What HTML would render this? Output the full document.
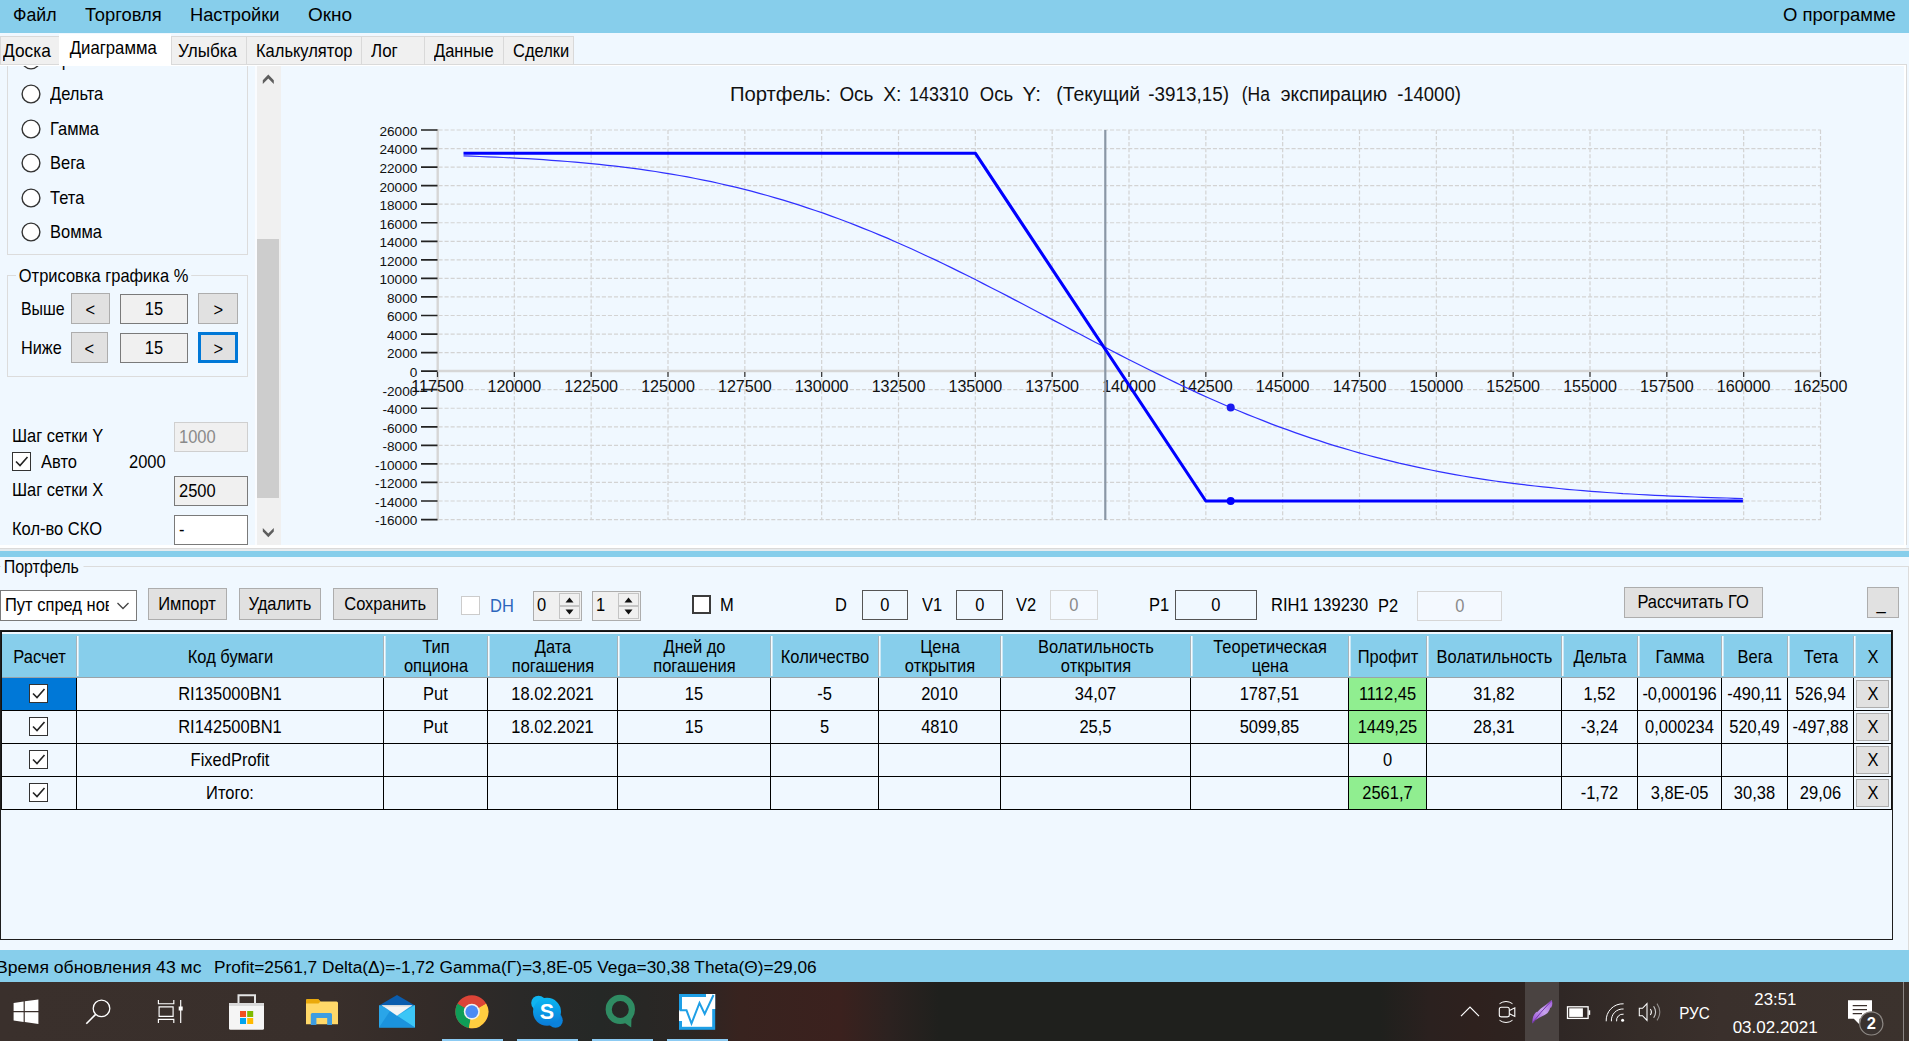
<!DOCTYPE html><html lang="ru"><head><meta charset="utf-8"><title>Option chart</title><style>
*{box-sizing:border-box;margin:0;padding:0}
html,body{width:1909px;height:1041px;overflow:hidden;background:#F0F8FF;font-family:"Liberation Sans",sans-serif;color:#000}
.a{position:absolute}
.t{position:absolute;white-space:pre;font-size:17.8px;line-height:20px;height:20px;transform:scaleX(.927);transform-origin:0 50%}
.s{display:inline-block;transform:scaleX(.927);transform-origin:50% 50%}
.sl{display:inline-block;transform:scaleX(.927);transform-origin:0 50%}
.c{text-align:center}
.r{text-align:right}
.menu{left:0;top:0;width:1909px;height:33px;background:#87CEEB}
.menu .t{font-size:18px;top:4px;line-height:22px;height:22px;transform:none}
.tab{position:absolute;top:36px;height:28px;background:#F0F0F0;border:1px solid #D9D9D9;border-bottom:none;font-size:17.8px;line-height:28px;white-space:pre}
.tab.sel{top:34px;height:32px;background:#fff;border:none;line-height:28px;z-index:2}
.gb{position:absolute;border:1px solid #DCDCDC}
.radio{position:absolute;width:19px;height:19px;border:1.5px solid #333;border-radius:50%;background:#fff}
.btn{position:absolute;background:#E1E1E1;border:1px solid #ADADAD;font-size:17.8px;text-align:center;white-space:pre}
.inp{position:absolute;background:#fff;border:1px solid #7A7A7A;font-size:17.8px;white-space:pre}
.chk{position:absolute;width:19px;height:19px;border:1px solid #333;background:#fff}
.hd{position:absolute;font-size:17.8px;line-height:19px;text-align:center;white-space:pre;transform:scaleX(.927)}
.cell{position:absolute;font-size:17.8px;line-height:20px;height:20px;text-align:center;white-space:pre;transform:scaleX(.927)}
</style></head><body>
<div class="a menu">
<div class="t" style="left:12.5px;transform:scaleX(0.983)">Файл</div>
<div class="t" style="left:84.8px;transform:scaleX(1.02)">Торговля</div>
<div class="t" style="left:189.6px;transform:scaleX(1.014)">Настройки</div>
<div class="t" style="left:307.8px;transform:scaleX(1.055)">Окно</div>
<div class="t" style="left:1783px;transform:scaleX(1.025)">О программе</div>
</div>
<div class="a" style="left:0;top:33px;width:1909px;height:33px;background:#F0F8FF"></div>
<div class="tab" style="left:0px;width:60px;padding-left:2px"><span class="sl" style="transform:scaleX(0.973)">Доска</span></div>
<div class="tab sel c" style="left:59px;width:112px;padding-right:3px"><span class="s" style="transform:scaleX(0.941)">Диаграмма</span></div>
<div class="tab" style="left:171px;width:76px;padding-left:6px"><span class="sl" style="transform:scaleX(0.959)">Улыбка</span></div>
<div class="tab" style="left:246px;width:116px;padding-left:9px"><span class="sl" style="transform:scaleX(0.927)">Калькулятор</span></div>
<div class="tab" style="left:361px;width:64px;padding-left:9px"><span class="sl" style="transform:scaleX(0.955)">Лог</span></div>
<div class="tab" style="left:424px;width:80px;padding-left:9px"><span class="sl" style="transform:scaleX(0.927)">Данные</span></div>
<div class="tab" style="left:503px;width:71px;padding-left:9px"><span class="sl" style="transform:scaleX(0.927)">Сделки</span></div>
<div class="a" style="left:0;top:64px;width:1909px;height:1px;background:#DADADA"></div>
<div class="a" style="left:0;top:65px;width:1909px;height:1px;background:#fff"></div>
<div class="a" style="left:0;top:66px;width:257px;height:479px;overflow:hidden"><div class="a" style="left:0;top:1px">
<div class="gb" style="left:7px;top:-60px;width:241px;height:248px"></div>
<svg class="a" style="left:20px;top:-18.5px" width="22" height="22"><circle cx="11" cy="11" r="8.9" fill="#fff" stroke="#333" stroke-width="1.4"/></svg>
<div class="t" style="left:50px;top:-17px">Прибыль</div>
<svg class="a" style="left:20px;top:16.0px" width="22" height="22"><circle cx="11" cy="11" r="8.9" fill="#fff" stroke="#333" stroke-width="1.4"/></svg>
<div class="t" style="left:50px;top:17.0px">Дельта</div>
<svg class="a" style="left:20px;top:50.5px" width="22" height="22"><circle cx="11" cy="11" r="8.9" fill="#fff" stroke="#333" stroke-width="1.4"/></svg>
<div class="t" style="left:50px;top:51.5px">Гамма</div>
<svg class="a" style="left:20px;top:85.0px" width="22" height="22"><circle cx="11" cy="11" r="8.9" fill="#fff" stroke="#333" stroke-width="1.4"/></svg>
<div class="t" style="left:50px;top:86.0px">Вега</div>
<svg class="a" style="left:20px;top:119.5px" width="22" height="22"><circle cx="11" cy="11" r="8.9" fill="#fff" stroke="#333" stroke-width="1.4"/></svg>
<div class="t" style="left:50px;top:120.5px">Тета</div>
<svg class="a" style="left:20px;top:154.0px" width="22" height="22"><circle cx="11" cy="11" r="8.9" fill="#fff" stroke="#333" stroke-width="1.4"/></svg>
<div class="t" style="left:50px;top:155.0px">Вомма</div>
<div class="gb" style="left:7px;top:208px;width:241px;height:102px"></div>
<div class="t" style="left:16px;top:199px;background:#F0F8FF;padding:0 3px">Отрисовка графика %</div>
<div class="t" style="left:21px;top:232px;transform:scaleX(0.895)">Выше</div>
<div class="btn" style="left:71px;top:226px;width:39px;height:31px;line-height:33px"><span class="s">&lt;</span></div>
<div class="inp c" style="left:120px;top:227px;width:68px;height:30px;line-height:28px;background:#F0F0F0"><span class="s">15</span></div>
<div class="btn" style="left:198px;top:226px;width:40px;height:31px;line-height:33px"><span class="s">&gt;</span></div>
<div class="t" style="left:21px;top:271px;transform:scaleX(0.915)">Ниже</div>
<div class="btn" style="left:71px;top:265px;width:37px;height:31px;line-height:33px"><span class="s">&lt;</span></div>
<div class="inp c" style="left:120px;top:266px;width:68px;height:30px;line-height:28px;background:#F0F0F0"><span class="s">15</span></div>
<div class="btn" style="left:198px;top:265px;width:40px;height:31px;line-height:29px;border:3px solid #0078D7"><span class="s">&gt;</span></div>
<div class="t" style="left:12px;top:359px">Шаг сетки Y</div>
<div class="inp" style="left:174px;top:355px;width:74px;height:30px;line-height:28px;background:#F0F0F0;border-color:#CFCFCF;color:#8A8A8A;padding-left:4px"><span class="sl">1000</span></div>
<div class="chk" style="left:12px;top:385px"><svg width="17" height="17" viewBox="0 0 17 17" style="display:block"><path d="M3 8.5 L7 12.5 L14.5 4" fill="none" stroke="#222" stroke-width="1.6"/></svg></div>
<div class="t" style="left:41px;top:385px">Авто</div>
<div class="t" style="left:129px;top:385px">2000</div>
<div class="t" style="left:12px;top:413px">Шаг сетки X</div>
<div class="inp" style="left:174px;top:409px;width:74px;height:30px;line-height:28px;background:#F0F0F0;padding-left:4px"><span class="sl">2500</span></div>
<div class="t" style="left:12px;top:452px">Кол-во СКО</div>
<div class="inp" style="left:174px;top:448px;width:74px;height:30px;line-height:28px;padding-left:4px"><span class="sl">-</span></div>
</div></div>
<div class="a" style="left:255px;top:66px;width:2px;height:479px;background:#FAFCFF"></div><div class="a" style="left:257px;top:66px;width:24px;height:479px;background:#F0F0F0"></div>
<div class="a" style="left:257px;top:239px;width:22px;height:259px;background:#CDCDCD"></div>
<svg class="a" style="left:0;top:0" width="300" height="560"><path d="M262.8 80.3 L268.3 74.6 L273.8 80.3 V84 L268.3 78.5 L262.8 84Z M262.8 527.9 L268.3 533.5 L273.8 527.9 V531.6 L268.3 537.3 L262.8 531.6Z" fill="#5E5E5E"/></svg>
<div class="a" style="left:1904px;top:65px;width:2px;height:483px;background:#fff"></div>
<div class="a" style="left:1906px;top:64px;width:1px;height:485px;background:#DADADA"></div><div class="a" style="left:1907px;top:64px;width:2px;height:2px;background:#F0F8FF"></div>
<svg class="a" style="left:0;top:0" width="1909" height="560" viewBox="0 0 1909 560" font-family="Liberation Sans, sans-serif">
<path d="M438.5 130.00H1821 M438.5 148.55H1821 M438.5 167.10H1821 M438.5 185.65H1821 M438.5 204.20H1821 M438.5 222.75H1821 M438.5 241.30H1821 M438.5 259.85H1821 M438.5 278.40H1821 M438.5 296.95H1821 M438.5 315.50H1821 M438.5 334.05H1821 M438.5 352.60H1821 M438.5 371.15H1821 M438.5 389.70H1821 M438.5 408.25H1821 M438.5 426.80H1821 M438.5 445.35H1821 M438.5 463.90H1821 M438.5 482.45H1821 M438.5 501.00H1821 M438.5 519.55H1821 M514.33 130V520 M591.17 130V520 M668.00 130V520 M744.83 130V520 M821.67 130V520 M898.50 130V520 M975.33 130V520 M1052.17 130V520 M1129.00 130V520 M1205.83 130V520 M1282.67 130V520 M1359.50 130V520 M1436.33 130V520 M1513.17 130V520 M1590.00 130V520 M1666.83 130V520 M1743.67 130V520 M1820.50 130V520" stroke="#D3D3D3" stroke-width="1.2" stroke-dasharray="4.1 1.95" fill="none"/>
<path d="M437.7 129V520.5" stroke="#D6D6D6" stroke-width="2.4"/>
<path d="M437 371H1821" stroke="#D6D6D6" stroke-width="2.4"/>
<text x="417.3" y="135.8" font-size="13.6" text-anchor="end" fill="#111">26000</text>
<text x="417.3" y="154.4" font-size="13.6" text-anchor="end" fill="#111">24000</text>
<text x="417.3" y="172.9" font-size="13.6" text-anchor="end" fill="#111">22000</text>
<text x="417.3" y="191.5" font-size="13.6" text-anchor="end" fill="#111">20000</text>
<text x="417.3" y="210.0" font-size="13.6" text-anchor="end" fill="#111">18000</text>
<text x="417.3" y="228.6" font-size="13.6" text-anchor="end" fill="#111">16000</text>
<text x="417.3" y="247.1" font-size="13.6" text-anchor="end" fill="#111">14000</text>
<text x="417.3" y="265.7" font-size="13.6" text-anchor="end" fill="#111">12000</text>
<text x="417.3" y="284.2" font-size="13.6" text-anchor="end" fill="#111">10000</text>
<text x="417.3" y="302.8" font-size="13.6" text-anchor="end" fill="#111">8000</text>
<text x="417.3" y="321.3" font-size="13.6" text-anchor="end" fill="#111">6000</text>
<text x="417.3" y="339.9" font-size="13.6" text-anchor="end" fill="#111">4000</text>
<text x="417.3" y="358.4" font-size="13.6" text-anchor="end" fill="#111">2000</text>
<text x="417.3" y="376.9" font-size="13.6" text-anchor="end" fill="#111">0</text>
<text x="417.3" y="395.5" font-size="13.6" text-anchor="end" fill="#111">-2000</text>
<text x="417.3" y="414.1" font-size="13.6" text-anchor="end" fill="#111">-4000</text>
<text x="417.3" y="432.6" font-size="13.6" text-anchor="end" fill="#111">-6000</text>
<text x="417.3" y="451.2" font-size="13.6" text-anchor="end" fill="#111">-8000</text>
<text x="417.3" y="469.7" font-size="13.6" text-anchor="end" fill="#111">-10000</text>
<text x="417.3" y="488.2" font-size="13.6" text-anchor="end" fill="#111">-12000</text>
<text x="417.3" y="506.8" font-size="13.6" text-anchor="end" fill="#111">-14000</text>
<text x="417.3" y="525.3" font-size="13.6" text-anchor="end" fill="#111">-16000</text>
<path d="M421 130.00H437.5 M421 148.55H437.5 M421 167.10H437.5 M421 185.65H437.5 M421 204.20H437.5 M421 222.75H437.5 M421 241.30H437.5 M421 259.85H437.5 M421 278.40H437.5 M421 296.95H437.5 M421 315.50H437.5 M421 334.05H437.5 M421 352.60H437.5 M421 371.15H437.5 M421 389.70H437.5 M421 408.25H437.5 M421 426.80H437.5 M421 445.35H437.5 M421 463.90H437.5 M421 482.45H437.5 M421 501.00H437.5 M421 519.55H437.5" stroke="#222" stroke-width="1.7" fill="none"/>
<text x="437.5" y="392.2" font-size="16.1" text-anchor="middle" fill="#111">117500</text>
<text x="514.3" y="392.2" font-size="16.1" text-anchor="middle" fill="#111">120000</text>
<text x="591.2" y="392.2" font-size="16.1" text-anchor="middle" fill="#111">122500</text>
<text x="668.0" y="392.2" font-size="16.1" text-anchor="middle" fill="#111">125000</text>
<text x="744.8" y="392.2" font-size="16.1" text-anchor="middle" fill="#111">127500</text>
<text x="821.7" y="392.2" font-size="16.1" text-anchor="middle" fill="#111">130000</text>
<text x="898.5" y="392.2" font-size="16.1" text-anchor="middle" fill="#111">132500</text>
<text x="975.3" y="392.2" font-size="16.1" text-anchor="middle" fill="#111">135000</text>
<text x="1052.2" y="392.2" font-size="16.1" text-anchor="middle" fill="#111">137500</text>
<text x="1129.0" y="392.2" font-size="16.1" text-anchor="middle" fill="#111">140000</text>
<text x="1205.8" y="392.2" font-size="16.1" text-anchor="middle" fill="#111">142500</text>
<text x="1282.7" y="392.2" font-size="16.1" text-anchor="middle" fill="#111">145000</text>
<text x="1359.5" y="392.2" font-size="16.1" text-anchor="middle" fill="#111">147500</text>
<text x="1436.3" y="392.2" font-size="16.1" text-anchor="middle" fill="#111">150000</text>
<text x="1513.2" y="392.2" font-size="16.1" text-anchor="middle" fill="#111">152500</text>
<text x="1590.0" y="392.2" font-size="16.1" text-anchor="middle" fill="#111">155000</text>
<text x="1666.8" y="392.2" font-size="16.1" text-anchor="middle" fill="#111">157500</text>
<text x="1743.7" y="392.2" font-size="16.1" text-anchor="middle" fill="#111">160000</text>
<text x="1820.5" y="392.2" font-size="16.1" text-anchor="middle" fill="#111">162500</text>
<path d="M437.50 372V377 M514.33 372V377 M591.17 372V377 M668.00 372V377 M744.83 372V377 M821.67 372V377 M898.50 372V377 M975.33 372V377 M1052.17 372V377 M1129.00 372V377 M1205.83 372V377 M1282.67 372V377 M1359.50 372V377 M1436.33 372V377 M1513.17 372V377 M1590.00 372V377 M1666.83 372V377 M1743.67 372V377 M1820.50 372V377" stroke="#333" stroke-width="1.2" fill="none"/>
<path d="M1105.3 130V520" stroke="#8A97A6" stroke-width="2.2"/>
<polyline points="463.5,155.9 471.5,156.2 479.5,156.5 487.5,156.8 495.5,157.1 503.5,157.5 511.5,157.9 519.5,158.3 527.5,158.7 535.5,159.2 543.4,159.7 551.4,160.3 559.4,160.9 567.4,161.5 575.4,162.1 583.4,162.9 591.4,163.6 599.4,164.4 607.4,165.3 615.4,166.2 623.4,167.1 631.4,168.1 639.4,169.2 647.4,170.3 655.4,171.5 663.4,172.8 671.4,174.1 679.4,175.5 687.4,176.9 695.4,178.5 703.4,180.1 711.4,181.7 719.4,183.5 727.4,185.3 735.4,187.2 743.4,189.1 751.4,191.2 759.3,193.3 767.3,195.5 775.3,197.8 783.3,200.2 791.3,202.6 799.3,205.2 807.3,207.8 815.3,210.5 823.3,213.2 831.3,216.1 839.3,219.0 847.3,222.0 855.3,225.1 863.3,228.3 871.3,231.5 879.3,234.9 887.3,238.2 895.3,241.7 903.3,245.2 911.3,248.8 919.3,252.5 927.3,256.2 935.3,259.9 943.3,263.8 951.3,267.6 959.3,271.6 967.3,275.5 975.3,279.5 983.2,283.6 991.2,287.7 999.2,291.8 1007.2,295.9 1015.2,300.1 1023.2,304.3 1031.2,308.5 1039.2,312.7 1047.2,316.9 1055.2,321.1 1063.2,325.3 1071.2,329.6 1079.2,333.8 1087.2,338.0 1095.2,342.2 1103.2,346.3 1111.2,350.5 1119.2,354.6 1127.2,358.7 1135.2,362.7 1143.2,366.7 1151.2,370.7 1159.2,374.6 1167.2,378.5 1175.2,382.4 1183.2,386.2 1191.2,389.9 1199.1,393.6 1207.1,397.2 1215.1,400.7 1223.1,404.2 1231.1,407.7 1239.1,411.0 1247.1,414.3 1255.1,417.5 1263.1,420.7 1271.1,423.8 1279.1,426.8 1287.1,429.7 1295.1,432.6 1303.1,435.4 1311.1,438.1 1319.1,440.7 1327.1,443.3 1335.1,445.8 1343.1,448.2 1351.1,450.5 1359.1,452.8 1367.1,455.0 1375.1,457.1 1383.1,459.2 1391.1,461.1 1399.1,463.1 1407.1,464.9 1415.0,466.7 1423.0,468.4 1431.0,470.0 1439.0,471.6 1447.0,473.1 1455.0,474.6 1463.0,476.0 1471.0,477.3 1479.0,478.6 1487.0,479.8 1495.0,481.0 1503.0,482.1 1511.0,483.1 1519.0,484.1 1527.0,485.1 1535.0,486.0 1543.0,486.9 1551.0,487.7 1559.0,488.5 1567.0,489.3 1575.0,490.0 1583.0,490.7 1591.0,491.3 1599.0,491.9 1607.0,492.5 1615.0,493.0 1623.0,493.6 1630.9,494.0 1638.9,494.5 1646.9,494.9 1654.9,495.3 1662.9,495.7 1670.9,496.1 1678.9,496.4 1686.9,496.7 1694.9,497.0 1702.9,497.3 1710.9,497.6 1718.9,497.8 1726.9,498.0 1734.9,498.3 1742.9,498.5" fill="none" stroke="#3030FF" stroke-width="1.25"/>
<polyline points="463.5,153.2 975.3,153.2 1205.8,501.0 1742.9,501.0" fill="none" stroke="#0000FF" stroke-width="3.1" stroke-linejoin="round"/>
<circle cx="1230.7" cy="407.5" r="4" fill="#1A1AF0"/>
<circle cx="1230.7" cy="501.0" r="4" fill="#0000FF"/>
<text x="729.9" y="100.5" font-size="19.5" fill="#111" textLength="101.1" lengthAdjust="spacingAndGlyphs">Портфель:</text>
<text x="839.4" y="100.5" font-size="19.5" fill="#111" textLength="34.0" lengthAdjust="spacingAndGlyphs">Ось</text>
<text x="883.2" y="100.5" font-size="19.5" fill="#111" textLength="18.3" lengthAdjust="spacingAndGlyphs">X:</text>
<text x="909.1" y="100.5" font-size="19.5" fill="#111" textLength="59.7" lengthAdjust="spacingAndGlyphs">143310</text>
<text x="979.8" y="100.5" font-size="19.5" fill="#111" textLength="33.3" lengthAdjust="spacingAndGlyphs">Ось</text>
<text x="1022.5" y="100.5" font-size="19.5" fill="#111" textLength="18.4" lengthAdjust="spacingAndGlyphs">Y:</text>
<text x="1056.3" y="100.5" font-size="19.5" fill="#111" textLength="83.8" lengthAdjust="spacingAndGlyphs">(Текущий</text>
<text x="1148.3" y="100.5" font-size="19.5" fill="#111" textLength="80.7" lengthAdjust="spacingAndGlyphs">-3913,15)</text>
<text x="1241.8" y="100.5" font-size="19.5" fill="#111" textLength="28.1" lengthAdjust="spacingAndGlyphs">(На</text>
<text x="1280.8" y="100.5" font-size="19.5" fill="#111" textLength="106.4" lengthAdjust="spacingAndGlyphs">экспирацию</text>
<text x="1397.2" y="100.5" font-size="19.5" fill="#111" textLength="63.6" lengthAdjust="spacingAndGlyphs">-14000)</text>
</svg>
<div class="a" style="left:0;top:545px;width:1909px;height:3px;background:#fff"></div>
<div class="a" style="left:0;top:548px;width:1909px;height:1px;background:#DADADA"></div>
<div class="a" style="left:0;top:549px;width:1909px;height:2px;background:#E6EBEE"></div>
<div class="a" style="left:0;top:551px;width:1909px;height:6px;background:#87CEEB"></div>
<div class="a" style="left:1906px;top:545px;width:3px;height:3px;background:#F0F8FF"></div>
<div class="a" style="left:0;top:566px;width:1909px;height:1px;background:#DCDCDC"></div>
<div class="a" style="left:1908px;top:566px;width:1px;height:384px;background:#DCDCDC"></div>
<div class="t" style="left:1px;top:557px;background:#F0F8FF;padding:0 5px 0 3px;width:92px;transform:scaleX(.897)">Портфель</div>
<div class="inp" style="left:0px;top:590px;width:137px;height:31px;border-color:#7A7A7A;line-height:29px;padding-left:4px;overflow:hidden"><span class="sl" style="width:112px;overflow:hidden;vertical-align:top">Пут спред новый</span></div>
<svg class="a" style="left:114px;top:598px" width="18" height="16"><path d="M3.5 5 L9 10.5 L14.5 5" fill="none" stroke="#444" stroke-width="1.3"/></svg>
<div class="btn" style="left:148px;top:588px;width:79px;height:32px;line-height:30px"><span class="s">Импорт</span></div>
<div class="btn" style="left:239px;top:588px;width:82px;height:32px;line-height:30px"><span class="s">Удалить</span></div>
<div class="btn" style="left:333px;top:588px;width:105px;height:32px;line-height:30px"><span class="s">Сохранить</span></div>
<div class="chk" style="left:461px;top:596px;border-color:#CCCCCC"></div>
<div class="t" style="left:490px;top:596px;color:#2C66BC">DH</div>
<div class="inp" style="left:533px;top:591px;width:49px;height:30px;background:#F0F0F0;border-color:#ADADAD;line-height:26px;padding-left:3px"><span class="sl">0</span></div>
<div class="a" style="left:559px;top:593px;width:21px;height:13px;background:#F0F0F0;border:1px solid #C4C4C4"></div>
<div class="a" style="left:559px;top:606px;width:21px;height:13px;background:#F0F0F0;border:1px solid #C4C4C4"></div>
<svg class="a" style="left:559px;top:593px" width="21" height="26"><path d="M6.5 9.5 L10.5 4.5 L14.5 9.5Z M6.5 16.5 L10.5 21.5 L14.5 16.5Z" fill="#111"/></svg>
<div class="inp" style="left:592px;top:591px;width:49px;height:30px;background:#F0F0F0;border-color:#ADADAD;line-height:26px;padding-left:3px"><span class="sl">1</span></div>
<div class="a" style="left:618px;top:593px;width:21px;height:13px;background:#F0F0F0;border:1px solid #C4C4C4"></div>
<div class="a" style="left:618px;top:606px;width:21px;height:13px;background:#F0F0F0;border:1px solid #C4C4C4"></div>
<svg class="a" style="left:618px;top:593px" width="21" height="26"><path d="M6.5 9.5 L10.5 4.5 L14.5 9.5Z M6.5 16.5 L10.5 21.5 L14.5 16.5Z" fill="#111"/></svg>
<div class="chk" style="left:692px;top:595px;border:2px solid #3C3C3C"></div>
<div class="t" style="left:720px;top:595px">M</div>
<div class="t" style="left:835px;top:595px">D</div>
<div class="inp c" style="left:862px;top:590px;width:46px;height:30px;line-height:28px;background:#F0F8FF;border-color:#555"><span class="s">0</span></div>
<div class="t" style="left:922px;top:595px">V1</div>
<div class="inp c" style="left:956px;top:590px;width:47px;height:30px;line-height:28px;background:#F0F8FF;border-color:#555"><span class="s">0</span></div>
<div class="t" style="left:1016px;top:595px">V2</div>
<div class="inp c" style="left:1050px;top:590px;width:48px;height:30px;line-height:28px;background:#F4F9FF;border-color:#D6D6D6;color:#8A8A8A"><span class="s">0</span></div>
<div class="t" style="left:1149px;top:595px">P1</div>
<div class="inp c" style="left:1175px;top:590px;width:82px;height:30px;line-height:28px;background:#F0F8FF;border-color:#555"><span class="s">0</span></div>
<div class="t" style="left:1271px;top:595px">RIH1 139230</div>
<div class="t" style="left:1378px;top:596px">P2</div>
<div class="inp c" style="left:1417px;top:591px;width:85px;height:30px;line-height:28px;background:#F4F9FF;border-color:#D6D6D6;color:#8A8A8A"><span class="s">0</span></div>
<div class="btn" style="left:1624px;top:587px;width:139px;height:31px;line-height:29px"><span class="s">Рассчитать ГО</span></div>
<div class="btn" style="left:1867px;top:587px;width:32px;height:31px;line-height:31px;text-indent:-2px"><span class="s">_</span></div>
<div class="a" style="left:0;top:630px;width:1893px;height:310px;border:1px solid #1E1E1E;background:#F0F8FF"></div>
<div class="a" style="left:1px;top:631px;width:1891px;height:179px;border:1px solid #111;border-bottom:none"></div>
<div class="a" style="left:2px;top:634px;width:1889px;height:43px;background:#87CEEB"></div>
<div class="hd" style="left:2px;top:648px;width:75px">Расчет</div>
<div class="a" style="left:76px;top:636px;width:1px;height:40px;background:#A8B4BA"></div>
<div class="a" style="left:77px;top:636px;width:2px;height:40px;background:linear-gradient(90deg,#F6FBFE 0 1px,#C9E8F6 1px 2px)"></div>
<div class="hd" style="left:77px;top:648px;width:307px">Код бумаги</div>
<div class="a" style="left:383px;top:636px;width:1px;height:40px;background:#A8B4BA"></div>
<div class="a" style="left:384px;top:636px;width:2px;height:40px;background:linear-gradient(90deg,#F6FBFE 0 1px,#C9E8F6 1px 2px)"></div>
<div class="hd" style="left:384px;top:637.5px;width:104px">Тип<br>опциона</div>
<div class="a" style="left:487px;top:636px;width:1px;height:40px;background:#A8B4BA"></div>
<div class="a" style="left:488px;top:636px;width:2px;height:40px;background:linear-gradient(90deg,#F6FBFE 0 1px,#C9E8F6 1px 2px)"></div>
<div class="hd" style="left:488px;top:637.5px;width:130px">Дата<br>погашения</div>
<div class="a" style="left:617px;top:636px;width:1px;height:40px;background:#A8B4BA"></div>
<div class="a" style="left:618px;top:636px;width:2px;height:40px;background:linear-gradient(90deg,#F6FBFE 0 1px,#C9E8F6 1px 2px)"></div>
<div class="hd" style="left:618px;top:637.5px;width:153px">Дней до<br>погашения</div>
<div class="a" style="left:770px;top:636px;width:1px;height:40px;background:#A8B4BA"></div>
<div class="a" style="left:771px;top:636px;width:2px;height:40px;background:linear-gradient(90deg,#F6FBFE 0 1px,#C9E8F6 1px 2px)"></div>
<div class="hd" style="left:771px;top:648px;width:108px">Количество</div>
<div class="a" style="left:878px;top:636px;width:1px;height:40px;background:#A8B4BA"></div>
<div class="a" style="left:879px;top:636px;width:2px;height:40px;background:linear-gradient(90deg,#F6FBFE 0 1px,#C9E8F6 1px 2px)"></div>
<div class="hd" style="left:879px;top:637.5px;width:122px">Цена<br>открытия</div>
<div class="a" style="left:1000px;top:636px;width:1px;height:40px;background:#A8B4BA"></div>
<div class="a" style="left:1001px;top:636px;width:2px;height:40px;background:linear-gradient(90deg,#F6FBFE 0 1px,#C9E8F6 1px 2px)"></div>
<div class="hd" style="left:1001px;top:637.5px;width:190px">Волатильность<br>открытия</div>
<div class="a" style="left:1190px;top:636px;width:1px;height:40px;background:#A8B4BA"></div>
<div class="a" style="left:1191px;top:636px;width:2px;height:40px;background:linear-gradient(90deg,#F6FBFE 0 1px,#C9E8F6 1px 2px)"></div>
<div class="hd" style="left:1191px;top:637.5px;width:158px">Теоретическая<br>цена</div>
<div class="a" style="left:1348px;top:636px;width:1px;height:40px;background:#A8B4BA"></div>
<div class="a" style="left:1349px;top:636px;width:2px;height:40px;background:linear-gradient(90deg,#F6FBFE 0 1px,#C9E8F6 1px 2px)"></div>
<div class="hd" style="left:1349px;top:648px;width:78px">Профит</div>
<div class="a" style="left:1426px;top:636px;width:1px;height:40px;background:#A8B4BA"></div>
<div class="a" style="left:1427px;top:636px;width:2px;height:40px;background:linear-gradient(90deg,#F6FBFE 0 1px,#C9E8F6 1px 2px)"></div>
<div class="hd" style="left:1427px;top:648px;width:135px">Волатильность</div>
<div class="a" style="left:1561px;top:636px;width:1px;height:40px;background:#A8B4BA"></div>
<div class="a" style="left:1562px;top:636px;width:2px;height:40px;background:linear-gradient(90deg,#F6FBFE 0 1px,#C9E8F6 1px 2px)"></div>
<div class="hd" style="left:1562px;top:648px;width:76px">Дельта</div>
<div class="a" style="left:1637px;top:636px;width:1px;height:40px;background:#A8B4BA"></div>
<div class="a" style="left:1638px;top:636px;width:2px;height:40px;background:linear-gradient(90deg,#F6FBFE 0 1px,#C9E8F6 1px 2px)"></div>
<div class="hd" style="left:1638px;top:648px;width:84px">Гамма</div>
<div class="a" style="left:1721px;top:636px;width:1px;height:40px;background:#A8B4BA"></div>
<div class="a" style="left:1722px;top:636px;width:2px;height:40px;background:linear-gradient(90deg,#F6FBFE 0 1px,#C9E8F6 1px 2px)"></div>
<div class="hd" style="left:1722px;top:648px;width:66px">Вега</div>
<div class="a" style="left:1787px;top:636px;width:1px;height:40px;background:#A8B4BA"></div>
<div class="a" style="left:1788px;top:636px;width:2px;height:40px;background:linear-gradient(90deg,#F6FBFE 0 1px,#C9E8F6 1px 2px)"></div>
<div class="hd" style="left:1788px;top:648px;width:66px">Тета</div>
<div class="a" style="left:1853px;top:636px;width:1px;height:40px;background:#A8B4BA"></div>
<div class="a" style="left:1854px;top:636px;width:2px;height:40px;background:linear-gradient(90deg,#F6FBFE 0 1px,#C9E8F6 1px 2px)"></div>
<div class="hd" style="left:1854px;top:648px;width:38px">X</div>
<div class="a" style="left:2px;top:677px;width:1889px;height:1px;background:#9AA3A8"></div>
<div class="a" style="left:2px;top:710px;width:1889px;height:1px;background:#000"></div>
<div class="a" style="left:2px;top:678px;width:75px;height:32px;background:#0078D7"></div>
<div class="chk" style="left:29px;top:684px"><svg width="17" height="17" viewBox="0 0 17 17" style="display:block"><path d="M3 8.5 L7 12.5 L14.5 4" fill="none" stroke="#222" stroke-width="1.6"/></svg></div>
<div class="cell" style="left:77px;top:684px;width:306px">RI135000BN1</div>
<div class="cell" style="left:384px;top:684px;width:103px">Put</div>
<div class="cell" style="left:488px;top:684px;width:129px">18.02.2021</div>
<div class="cell" style="left:618px;top:684px;width:152px">15</div>
<div class="cell" style="left:771px;top:684px;width:107px">-5</div>
<div class="cell" style="left:879px;top:684px;width:121px">2010</div>
<div class="cell" style="left:1001px;top:684px;width:189px">34,07</div>
<div class="cell" style="left:1191px;top:684px;width:157px">1787,51</div>
<div class="a" style="left:1349px;top:678px;width:77px;height:32px;background:#90EE90"></div>
<div class="cell" style="left:1349px;top:684px;width:77px">1112,45</div>
<div class="cell" style="left:1427px;top:684px;width:134px">31,82</div>
<div class="cell" style="left:1562px;top:684px;width:75px">1,52</div>
<div class="cell" style="left:1638px;top:684px;width:83px">-0,000196</div>
<div class="cell" style="left:1722px;top:684px;width:65px">-490,11</div>
<div class="cell" style="left:1788px;top:684px;width:65px">526,94</div>
<div class="btn" style="left:1856px;top:680px;width:33px;height:28px;line-height:26px"><span class="s">X</span></div>
<div class="a" style="left:2px;top:743px;width:1889px;height:1px;background:#000"></div>
<div class="chk" style="left:29px;top:717px"><svg width="17" height="17" viewBox="0 0 17 17" style="display:block"><path d="M3 8.5 L7 12.5 L14.5 4" fill="none" stroke="#222" stroke-width="1.6"/></svg></div>
<div class="cell" style="left:77px;top:717px;width:306px">RI142500BN1</div>
<div class="cell" style="left:384px;top:717px;width:103px">Put</div>
<div class="cell" style="left:488px;top:717px;width:129px">18.02.2021</div>
<div class="cell" style="left:618px;top:717px;width:152px">15</div>
<div class="cell" style="left:771px;top:717px;width:107px">5</div>
<div class="cell" style="left:879px;top:717px;width:121px">4810</div>
<div class="cell" style="left:1001px;top:717px;width:189px">25,5</div>
<div class="cell" style="left:1191px;top:717px;width:157px">5099,85</div>
<div class="a" style="left:1349px;top:711px;width:77px;height:32px;background:#90EE90"></div>
<div class="cell" style="left:1349px;top:717px;width:77px">1449,25</div>
<div class="cell" style="left:1427px;top:717px;width:134px">28,31</div>
<div class="cell" style="left:1562px;top:717px;width:75px">-3,24</div>
<div class="cell" style="left:1638px;top:717px;width:83px">0,000234</div>
<div class="cell" style="left:1722px;top:717px;width:65px">520,49</div>
<div class="cell" style="left:1788px;top:717px;width:65px">-497,88</div>
<div class="btn" style="left:1856px;top:713px;width:33px;height:28px;line-height:26px"><span class="s">X</span></div>
<div class="a" style="left:2px;top:776px;width:1889px;height:1px;background:#000"></div>
<div class="chk" style="left:29px;top:750px"><svg width="17" height="17" viewBox="0 0 17 17" style="display:block"><path d="M3 8.5 L7 12.5 L14.5 4" fill="none" stroke="#222" stroke-width="1.6"/></svg></div>
<div class="cell" style="left:77px;top:750px;width:306px">FixedProfit</div>
<div class="cell" style="left:1349px;top:750px;width:77px">0</div>
<div class="btn" style="left:1856px;top:746px;width:33px;height:28px;line-height:26px"><span class="s">X</span></div>
<div class="a" style="left:2px;top:809px;width:1889px;height:1px;background:#000"></div>
<div class="chk" style="left:29px;top:783px"><svg width="17" height="17" viewBox="0 0 17 17" style="display:block"><path d="M3 8.5 L7 12.5 L14.5 4" fill="none" stroke="#222" stroke-width="1.6"/></svg></div>
<div class="cell" style="left:77px;top:783px;width:306px">Итого:</div>
<div class="a" style="left:1349px;top:777px;width:77px;height:32px;background:#90EE90"></div>
<div class="cell" style="left:1349px;top:783px;width:77px">2561,7</div>
<div class="cell" style="left:1562px;top:783px;width:75px">-1,72</div>
<div class="cell" style="left:1638px;top:783px;width:83px">3,8E-05</div>
<div class="cell" style="left:1722px;top:783px;width:65px">30,38</div>
<div class="cell" style="left:1788px;top:783px;width:65px">29,06</div>
<div class="btn" style="left:1856px;top:779px;width:33px;height:28px;line-height:26px"><span class="s">X</span></div>
<div class="a" style="left:76px;top:678px;width:1px;height:132px;background:#000"></div>
<div class="a" style="left:383px;top:678px;width:1px;height:132px;background:#000"></div>
<div class="a" style="left:487px;top:678px;width:1px;height:132px;background:#000"></div>
<div class="a" style="left:617px;top:678px;width:1px;height:132px;background:#000"></div>
<div class="a" style="left:770px;top:678px;width:1px;height:132px;background:#000"></div>
<div class="a" style="left:878px;top:678px;width:1px;height:132px;background:#000"></div>
<div class="a" style="left:1000px;top:678px;width:1px;height:132px;background:#000"></div>
<div class="a" style="left:1190px;top:678px;width:1px;height:132px;background:#000"></div>
<div class="a" style="left:1348px;top:678px;width:1px;height:132px;background:#000"></div>
<div class="a" style="left:1426px;top:678px;width:1px;height:132px;background:#000"></div>
<div class="a" style="left:1561px;top:678px;width:1px;height:132px;background:#000"></div>
<div class="a" style="left:1637px;top:678px;width:1px;height:132px;background:#000"></div>
<div class="a" style="left:1721px;top:678px;width:1px;height:132px;background:#000"></div>
<div class="a" style="left:1787px;top:678px;width:1px;height:132px;background:#000"></div>
<div class="a" style="left:1853px;top:678px;width:1px;height:132px;background:#000"></div>
<div class="a" style="left:0;top:950px;width:1909px;height:32px;background:#87CEEB"></div>
<div class="t" style="left:-4px;top:958px;font-size:15.6px;transform:scaleX(1.128)">Время обновления 43 мс</div>
<div class="t" style="left:213.5px;top:958px;font-size:15.6px;transform:scaleX(1.107)">Profit=2561,7 Delta(Δ)=-1,72 Gamma(Γ)=3,8E-05 Vega=30,38 Theta(Θ)=29,06</div>
<div class="a" style="left:0;top:982px;width:1909px;height:59px;background:linear-gradient(90deg,#3A302C 0px,#392F2B 330px,#332B28 430px,#2A2928 520px,#252826 600px,#2B2624 690px,#38231F 740px,#3B211E 840px,#2C2220 890px,#1F201D 940px,#1F201D 1380px,#2B211F 1430px,#2E211E 1475px,#2E2320 1520px,#2F2725 1560px,#352C28 1640px,#3A302C 1720px,#3B322D 1909px)"></div>
<div class="a" style="left:1525px;top:982px;width:34px;height:59px;background:#4A4341"></div>
<svg class="a" style="left:0;top:982px" width="1909" height="59" viewBox="0 982 1909 59" font-family="Liberation Sans, sans-serif">
<path d="M13.6 1002.9 L23.6 1001.5 V1011 H13.6Z M24.8 1001.3 L38.4 999.4 V1011 H24.8Z M13.6 1012.2 H23.6 V1021.9 L13.6 1020.5Z M24.8 1012.2 H38.4 V1024 L24.8 1022.1Z" fill="#fff"/>
<circle cx="101.5" cy="1008.4" r="8.3" fill="none" stroke="#fff" stroke-width="1.3"/><path d="M95.6 1014.4 L86.3 1023.8" stroke="#fff" stroke-width="1.6" fill="none"/>
<path d="M158.4 1000 V1003.7 H173.8 V1000 M158.4 1023 V1019.4 H173.8 V1023 M159.1 1006.9 H173.1 V1016.4 H159.1Z M180.7 1000 V1023" fill="none" stroke="#fff" stroke-width="1.15"/><rect x="178.7" y="1006.5" width="4" height="4" fill="#fff"/>
<path d="M238.5 1004 V995.2 H255 V1004" fill="none" stroke="#E4E4E4" stroke-width="2"/>
<path d="M229 1003 H264 V1028.3 Q264 1029.8 262.5 1029.8 H230.5 Q229 1029.8 229 1028.3Z" fill="#F5F5F5"/><rect x="229" y="1003" width="35" height="3" fill="#DADADA"/>
<rect x="240" y="1011" width="6" height="6" fill="#F25022"/><rect x="247.2" y="1011" width="6" height="6" fill="#7FBA00"/><rect x="240" y="1018" width="6" height="6" fill="#00A4EF"/><rect x="247.2" y="1018" width="6" height="6" fill="#FFB900"/>
<path d="M306 1000.5 Q306 999 307.5 999 H318 L320.5 1001.5 H336.5 Q338 1001.5 338 1003 V1024.3 H306Z" fill="#FFD869"/><path d="M306 1000.5 Q306 999 307.5 999 H318 L320.5 1001.5 L318.5 1003.6 H306Z" fill="#EAA90C"/>
<path d="M310.8 1025 V1014.5 Q310.8 1013 312.3 1013 H330.5 Q332 1013 332 1014.5 V1025 H327.2 V1018 H316.4 V1025Z" fill="#3E9DE2"/>
<path d="M379 1005.5 L397 995 L415 1005.5Z" fill="#0A5CAD"/><path d="M379 1005.2 H415 V1027.6 H379Z" fill="#2AA5E8"/><path d="M415 1005.2 V1027.6 L397 1016Z" fill="#3CC6F6"/><path d="M379 1027.6 H415 L390 1011Z" fill="#1B93DD"/><path d="M381.8 1005.2 H412.2 L397 1015.8Z" fill="#F4F4F4"/><path d="M381.8 1005.2 H412.2 L410.5 1006.5 H383.5Z" fill="#D8D8D8"/>
<circle cx="471.8" cy="1011.7" r="16.5" fill="#DB4437"/>
<path d="M471.8 1011.7 L486.09 1003.45 A16.5 16.5 0 0 1 468.93 1027.95 Z" fill="#FFCD40"/>
<path d="M471.8 1011.7 L468.93 1027.95 A16.5 16.5 0 0 1 457.51 1003.45 Z" fill="#0F9D58"/>
<path d="M457.51 1003.45 L471.80 1004.10 L471.8 1011.7 Z" fill="#DB4437"/>
<path d="M486.09 1003.45 L478.38 1015.50 L471.8 1011.7 L471.80 1004.10Z" fill="#FFCD40" opacity="0"/>
<path d="M486.09 1003.45 L471.80 1004.10 L471.8 1011.7 Z" fill="#DB4437"/>
<path d="M468.93 1027.95 L478.38 1015.50 L471.8 1011.7 Z" fill="#FFCD40"/>
<circle cx="471.8" cy="1011.7" r="8" fill="#F1F1F1"/><circle cx="471.8" cy="1011.7" r="6.4" fill="#4C8BF5"/>
<defs><linearGradient id="sk" x1="0" y1="0" x2="0" y2="1"><stop offset="0" stop-color="#0AB7F2"/><stop offset="1" stop-color="#0A7BD8"/></linearGradient></defs>
<circle cx="538.5" cy="1003" r="7.3" fill="#10B4F0"/><circle cx="555.5" cy="1020.5" r="7.3" fill="#0B82DB"/><circle cx="547" cy="1011.8" r="14" fill="url(#sk)"/>
<text x="547" y="1019.4" font-size="21.5" font-weight="bold" text-anchor="middle" fill="#fff">S</text>
<circle cx="620.3" cy="1009.4" r="11.6" fill="none" stroke="#2F8C63" stroke-width="6.2"/><path d="M623.5 1022 L631.2 1027.4 L631.5 1018Z" fill="#2F8C63"/>
<rect x="679" y="994" width="36.2" height="35.8" fill="#1E9FE6"/><rect x="682" y="997" width="30.2" height="29.8" fill="#fff"/><rect x="706" y="994" width="9.2" height="15" fill="#fff"/><rect x="679" y="1010" width="4" height="11" fill="#fff"/>
<path d="M679.5 1010.3 H686.5 L691.5 1023.5 L699.5 1003 L704.7 1014 L713.5 995" fill="none" stroke="#1E9FE6" stroke-width="2"/>
<rect x="442" y="1039" width="61" height="2" fill="#8CCBF3"/>
<rect x="517" y="1039" width="61" height="2" fill="#8CCBF3"/>
<rect x="592" y="1039" width="61" height="2" fill="#8CCBF3"/>
<rect x="667" y="1039" width="61" height="2" fill="#8CCBF3"/>
<path d="M1461 1016.2 L1470 1007.2 L1479 1016.2" fill="none" stroke="#fff" stroke-width="1.2"/>
<rect x="1499.3" y="1007.3" width="10" height="9.6" rx="2" fill="none" stroke="#fff" stroke-width="1.1"/><path d="M1509.5 1010.5 L1514.8 1007.8 V1016.4 L1509.5 1013.7" fill="none" stroke="#fff" stroke-width="1.1"/><path d="M1499.5 1003.7 Q1506 999.3 1512.5 1003.7 M1499.5 1020.3 Q1506 1024.7 1512.5 1020.3" fill="none" stroke="#fff" stroke-width="1"/>
<defs><linearGradient id="fe" x1="0" y1="1" x2="1" y2="0"><stop offset="0" stop-color="#9448D0"/><stop offset="0.55" stop-color="#C8A4EE"/><stop offset="1" stop-color="#A05CD8"/></linearGradient></defs>
<path d="M1532.3 1023.4 Q1532.2 1019.5 1533.2 1016.6 Q1534.4 1013.6 1536.4 1011.7 L1537 1012.3 Q1539.5 1009 1542.5 1007.2 Q1547 1004.5 1551.6 1000.1 Q1553.3 1004 1551.2 1007.4 L1550.2 1007.8 Q1549.8 1010.6 1547.6 1013 Q1544.5 1015.6 1539.6 1017.6 Q1535.4 1019.6 1532.3 1023.4Z" fill="url(#fe)"/><path d="M1532.5 1022.8 Q1540 1012.8 1551.3 1001" fill="none" stroke="#6C2DA6" stroke-width="0.9"/>
<rect x="1567.5" y="1006.8" width="20.6" height="11.6" fill="none" stroke="#fff" stroke-width="1.3"/><rect x="1588.6" y="1010.3" width="1.6" height="4.6" fill="#fff"/><rect x="1569.2" y="1008.3" width="13.7" height="8.6" fill="#fff"/>
<circle cx="1622.6" cy="1020.3" r="1.5" fill="#fff"/><path d="M1616.6 1021.3 A6.2 6.2 0 0 1 1623.6 1014.2 M1611.4 1021.3 A11.4 11.4 0 0 1 1623.6 1009 M1606.2 1021.3 A16.6 16.6 0 0 1 1623.6 1003.8" fill="none" stroke="#fff" stroke-width="1"/>
<path d="M1639.3 1008.3 H1642.5 L1647 1003.6 V1020.4 L1642.5 1015.7 H1639.3Z" fill="none" stroke="#fff" stroke-width="1.05"/><path d="M1650.3 1009 Q1652.5 1012 1650.3 1015" fill="none" stroke="#fff" stroke-width="1.1"/><path d="M1653.6 1006.2 Q1657.6 1012 1653.6 1017.8" fill="none" stroke="#CFCFCF" stroke-width="1.1"/><path d="M1657 1003.6 Q1662.6 1012 1657 1020.4" fill="none" stroke="#8F8A88" stroke-width="1.1"/>
<text x="1679.3" y="1018.8" font-size="16.6" fill="#fff" textLength="30.5" lengthAdjust="spacingAndGlyphs">РУС</text>
<text x="1775.3" y="1004.5" font-size="16.8" fill="#fff" text-anchor="middle">23:51</text>
<text x="1775.2" y="1032.5" font-size="17" fill="#fff" text-anchor="middle">03.02.2021</text>
<path d="M1848 1000.2 H1872 V1018.8 H1859.5 V1024.4 L1853.8 1018.8 H1848Z" fill="#fff"/><path d="M1852.7 1005.6 H1867 M1852.7 1009.6 H1867 M1852.7 1013.6 H1862" stroke="#3A302C" stroke-width="1.3"/>
<circle cx="1871.3" cy="1023.4" r="11.6" fill="#3A3330" stroke="#8E8985" stroke-width="1.2"/>
<text x="1871.3" y="1029.2" font-size="16.5" font-weight="bold" fill="#fff" text-anchor="middle">2</text>
<rect x="1903" y="982" width="1" height="59" fill="#8A8583"/>
</svg>
</body></html>
